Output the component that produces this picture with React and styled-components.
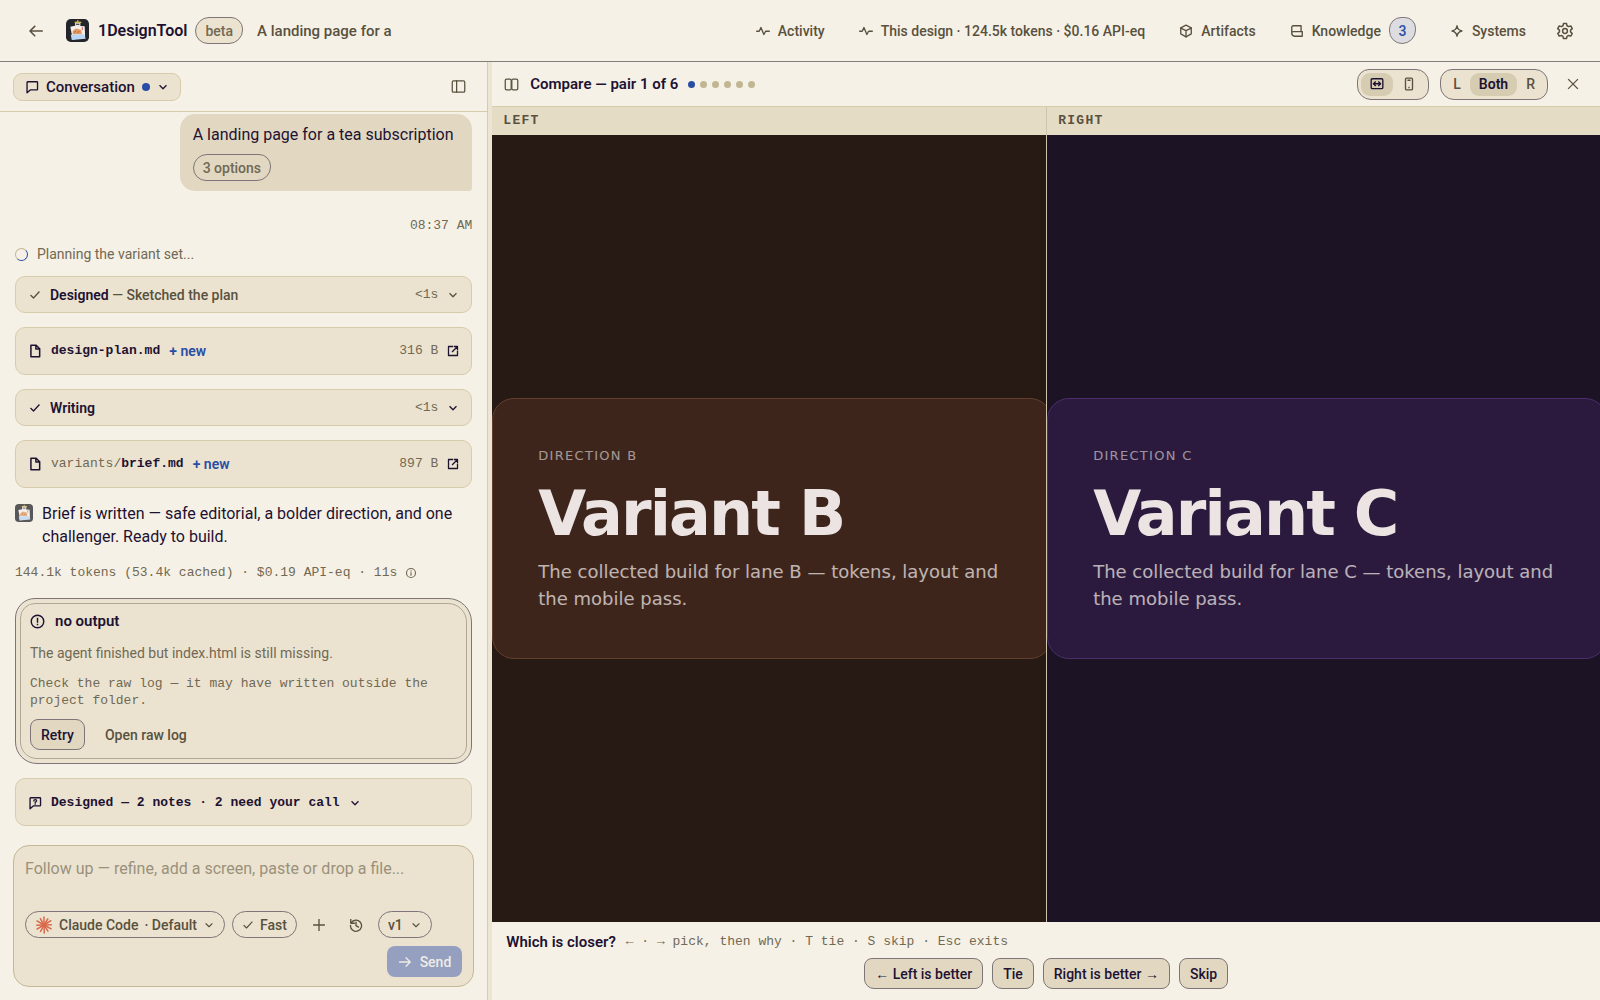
import React, { useState } from 'react';
import styled, { createGlobalStyle, css } from 'styled-components';

const sans = '"Roboto", "Liberation Sans", sans-serif';
const mono = '"Liberation Mono", "DejaVu Sans Mono", monospace';

const ink = '#1e1232';
const soft = '#59513f';
const muted = '#716953';
const paper = '#f6f1e6';
const card = '#ebe3d0';
const line = '#d6ccab';
const strong = '#7d7577';
const blue = '#2a4da5';

const GlobalStyle = createGlobalStyle`
  * { box-sizing: border-box; }
  body {
    margin: 0;
    background: ${paper};
    color: ${ink};
    font-family: ${sans};
    font-size: 14px;
    line-height: 20px;
  }
  button, textarea, select { font: inherit; color: inherit; margin: 0; }
  button { cursor: pointer; }
  h1, h2, h3, p { margin: 0; font-size: inherit; font-weight: inherit; }
`;

const Page = styled.div`
  height: 100vh;
  display: flex;
  flex-direction: column;
`;

const Svg = styled.svg`
  flex: none;
  display: block;
  fill: none;
  stroke: currentColor;
  stroke-width: ${p => p.$stroke || 2.3};
  stroke-linecap: square;
  stroke-linejoin: round;
`;

const shapes = {
  back: <path d="M21 12H3.500M10 5l-7 7 7 7" />,
  arrow: <path d="M3 12h17M14 5l7 7-7 7" />,
  pulse: <path d="M1.500 12.500h4l3-6.500 5 12 3-5.500h6" />,
  cube: <><path d="M12 2l9 4.500v10.500L12 22l-9-5V6.500z" /><path d="M3 7l9 4.500L21 7M12 12v10" /></>,
  book: <path d="M19 13V3H5.500A2.500 2.500 0 0 0 3 5.500v10M19 13H5.500A2.500 2.500 0 0 0 3 15.500 5.500 5.500 0 0 0 8 21h13v-8" />,
  spark: <path d="M12 3c.8 5.500 3.200 8 8.500 9-5.300 1-7.700 3.500-8.500 9-.8-5.500-3.200-8-8.500-9 5.300-1 7.700-3.500 8.500-9z" />,
  gear: <><circle cx="12" cy="12" r="3.200" /><path d="M10 2h4l.7 3 2 1.200 3-.9 2 3.500-2.300 2.100v2.300l2.300 2.100-2 3.500-3-.9-2 1.200-.7 3h-4l-.7-3-2-1.200-3 .9-2-3.500 2.300-2.100v-2.300L2.300 8.800l2-3.500 3 .9 2-1.200z" /></>,
  chat: <path d="M4.500 3h16a1 1 0 0 1 1 1v12a1 1 0 0 1-1 1H9l-5.500 5V4a1 1 0 0 1 1-1z" />,
  question: <><path d="M4.500 3h16a1 1 0 0 1 1 1v12a1 1 0 0 1-1 1H9l-5.500 5V4a1 1 0 0 1 1-1z" /><path d="M10 8.200c.3-2.700 5.200-2.400 4.700.3-.3 1.400-2 1.500-2.300 2.800M12.300 13.800v.1" /></>,
  panel: <><rect x="2" y="3" width="20" height="18" rx="2" /><path d="M9 3v18" /></>,
  compare: <><rect x="2" y="3.500" width="9.500" height="17" rx="2" /><rect x="12.500" y="3.500" width="9.500" height="17" rx="2" /></>,
  down: <path d="M6 9.500l6 6 6-6" />,
  check: <path d="M4 13l5 5L20 6" />,
  file: <path d="M5 2h9l6 6v14H5zM13.500 2v6.500H20" />,
  open: <path d="M11 3H3v18h18v-8M15 3h6v6M20.500 3.500L11 13" />,
  info: <><circle cx="12" cy="12" r="9" /><path d="M12 11.500v5M12 7.500v.2" /></>,
  alert: <><circle cx="12" cy="12" r="10" /><path d="M12 7v6M12 16.800v.2" /></>,
  plus: <path d="M12 3v18M3 12h18" />,
  close: <path d="M3 3l18 18M21 3L3 21" />,
  history: <path d="M3 3v6h6M3.500 9a9.500 9.500 0 1 1-1 4M12 7.500V13l4 2.500" />,
  desktop: <><rect x="2" y="3" width="20" height="17" rx="2" /><path d="M6 11.500h12M9 8.500l-3 3 3 3M15 8.500l3 3-3 3" /></>,
  phone: <><rect x="6" y="2" width="12" height="20" rx="2" /><path d="M10.500 5.500h3M12 18v.2" /></>
};

const Icon = ({ name, size = 14, stroke }) => (
  <Svg viewBox="0 0 24 24" width={size} height={size} $stroke={stroke} aria-hidden="true">
    {shapes[name]}
  </Svg>
);

const Logo = ({ size, faded }) => (
  <svg viewBox="0 0 24 24" width={size} height={size} opacity={faded ? 0.75 : 1} aria-hidden="true">
    <rect width="24" height="24" rx="5" fill="#24252a" />
    <path d="M4.500 8l5-1 10 .5.500 12-13 2z" fill="#f4f1ee" />
    <path d="M9.500 3h5.500v5H9.500z" fill="#ece8e2" />
    <path d="M9 3.500h7M12.300 1v3" stroke="#d8b94c" strokeWidth="1.200" />
    <path d="M10.500 5.500h3.500" stroke="#33353b" strokeWidth="1.200" />
    <path d="M7 16v-3.500l3-2.500 3 .5 3 1 .5 4.500z" fill="#e39a62" />
    <path d="M8.500 14l2-1.500M12 14.500l2-2" stroke="#a9623a" />
    <path d="M17 8.500v3" stroke="#d14a4a" />
    <path d="M5 16.500l14-.5 1.500 4.500-14.500 1.500z" fill="#b9d6f4" />
  </svg>
);

const rays = [0, 32, 58, 88, 118, 147, 178, 208, 240, 268, 300, 330];

const Burst = () => (
  <svg viewBox="0 0 24 24" width="18" height="18" stroke="#d9694b" strokeWidth="2" aria-hidden="true">
    {rays.map((angle, index) => (
      <path key={angle} d={index % 2 ? 'M12 12V1.500' : 'M12 12V.5'} transform={`rotate(${angle} 12 12)`} />
    ))}
  </svg>
);

/* ---------- top bar ---------- */

const TopBar = styled.header`
  flex: none;
  height: 62px;
  padding: 0 22px 0 24px;
  display: flex;
  align-items: center;
  border-bottom: 1px solid #857d7b;
  color: ${soft};
`;

const GhostButton = styled.button`
  display: flex;
  align-items: center;
  justify-content: center;
  gap: 8px;
  border: 0;
  background: none;
  padding: ${p => (p.$wide ? '4px 17px' : '4px')};
  font-weight: 500;
  color: ${soft};
  white-space: nowrap;
`;

const Brand = styled.a`
  display: flex;
  align-items: center;
  gap: 9px;
  margin-left: 18px;
  color: ${ink};
  font-size: 16px;
  font-weight: 600;
  text-decoration: none;
`;

const Pill = styled.span`
  display: inline-flex;
  align-items: center;
  height: 27px;
  padding: 0 9px;
  border: 1px solid ${strong};
  border-radius: 14px 12px 14px 13px;
  background: ${p => (p.$filled ? card : 'transparent')};
  color: ${muted};
  font-weight: 500;
`;

const ProjectName = styled.h1`
  flex: 1;
  margin-left: 14px;
  font-size: 15px;
  font-weight: 500;
`;

const BetaPill = styled(Pill)`
  margin-left: 8px;
`;

const Nav = styled.nav`
  display: flex;
  align-items: center;
`;

const SettingsButton = styled(GhostButton)`
  margin-left: 9px;
`;

const Count = styled.span`
  display: grid;
  place-items: center;
  width: 27px;
  height: 27px;
  border: 1px solid ${strong};
  border-radius: 13px 12px 15px 14px;
  background: #dddde1;
  color: ${blue};
`;

/* ---------- layout ---------- */

const Workspace = styled.main`
  flex: 1;
  min-height: 0;
  display: grid;
  grid-template-columns: minmax(360px, 4fr) minmax(0, 9fr);
`;

const Sidebar = styled.section`
  min-height: 0;
  display: flex;
  flex-direction: column;
  border-right: 4px solid #ece5d3;
`;

const SidebarInner = styled.div`
  flex: 1;
  min-height: 0;
  display: flex;
  flex-direction: column;
  border-right: 1px solid ${line};
`;

const SidebarHead = styled.div`
  flex: none;
  height: 50px;
  padding: 0 17px 0 13px;
  display: flex;
  align-items: center;
  justify-content: space-between;
  border-bottom: 1px solid ${line};
`;

const ThreadButton = styled.button`
  display: flex;
  align-items: center;
  gap: 7px;
  height: 28px;
  padding: 0 11px;
  border: 1px solid ${line};
  border-radius: 9px;
  background: ${card};
  font-size: 15px;
  font-weight: 500;
`;

const Dot = styled.span`
  width: ${p => p.$size}px;
  height: ${p => p.$size}px;
  border-radius: 50%;
  background: ${p => (p.$on ? blue : '#c1b694')};
`;

const Thread = styled.div`
  flex: 1;
  min-height: 0;
  overflow: hidden;
  padding: 2px 15px 0;
  display: flex;
  flex-direction: column;
  gap: 14px;
`;

const Mine = styled.div`
  display: flex;
  flex-direction: column;
  align-items: flex-end;
  gap: 28px;
`;

const Bubble = styled.div`
  width: 64%;
  padding: 10px 13px;
  border-radius: 15px 15px 3px 15px;
  background: #e2d8c2;
  font-size: 16px;
  line-height: 22px;

  & ${Pill} {
    margin-top: 8px;
    font-size: 14px;
  }
`;

const Mono = styled.span`
  font-family: ${mono};
  font-size: 13px;
  font-weight: 400;
  line-height: 14px;
  color: ${muted};
`;

const Planning = styled.div`
  display: flex;
  align-items: center;
  gap: 9px;
  line-height: 15px;
  color: ${muted};
`;

const Spinner = styled.span`
  width: 13px;
  height: 13px;
  border: 1px solid #c1b694;
  border-right-color: ${blue};
  border-bottom-color: ${blue};
  border-radius: 50%;
`;

const cardStyle = css`
  width: 100%;
  flex: none;
  display: flex;
  align-items: center;
  border: 1px solid ${line};
  border-radius: 10px;
  background: ${card};
  text-align: left;
`;

const Step = styled.button`
  ${cardStyle}
  height: 37px;
  padding: 0 12px 0 13px;
  gap: 9px;
  font-weight: 500;
  color: ${p => (p.$dim ? soft : ink)};

  & b { color: ${ink}; font-weight: 600; }
`;

const Grow = styled.span`
  flex: 1;
`;

const FileRow = styled.button`
  ${cardStyle}
  height: 48px;
  padding: 0 12px;
  gap: 9px;
`;

const FileName = styled(Mono)`
  color: ${ink};
  font-weight: 700;

  & i { font-style: normal; font-weight: 400; color: ${muted}; }
`;

const NewTag = styled.span`
  flex: 1;
  color: ${blue};
  font-weight: 600;
`;

const Reply = styled.div`
  display: flex;
  gap: 9px;
  font-size: 16px;
  line-height: 23px;

  & svg { flex: none; margin-top: 2px; }
`;

const Usage = styled.div`
  display: flex;
  align-items: center;
  gap: 8px;
  height: 22px;
  color: ${muted};
`;

const Alert = styled.section`
  flex: none;
  padding: 12px 14px 13px;
  border: 1px solid ${strong};
  border-radius: 20px 24px 18px 22px;
  outline: 1px solid #b0a797;
  outline-offset: -6px;
  background: ${card};
  color: ${soft};
`;

const AlertTitle = styled.h2`
  display: flex;
  align-items: center;
  gap: 10px;
  color: ${ink};
  font-size: 15px;
  font-weight: 600;
`;

const AlertText = styled.p`
  margin-top: 12px;
  color: ${muted};
`;

const AlertHint = styled(AlertText)`
  font-family: ${mono};
  font-size: 13px;
  line-height: 17px;
`;

const AlertActions = styled.div`
  margin-top: 10px;
  display: flex;
  gap: 3px;
`;

const Button = styled.button`
  height: 31px;
  padding: 0 10px;
  border: 1px solid ${strong};
  border-radius: 8px 9px 8px 10px;
  background: #e2d8c2;
  color: ${ink};
  font-weight: 500;
  white-space: nowrap;
`;

const Notes = styled(FileRow)`
  padding-top: 2px;
  font-family: ${mono};
  font-size: 13px;
  font-weight: 700;
`;

/* ---------- composer ---------- */

const Composer = styled.form`
  flex: none;
  margin: 16px 13px 13px;
  padding: 11px 11px 9px;
  border: 1px solid #c6b897;
  border-radius: 16px;
  background: ${card};
`;

const Prompt = styled.textarea`
  display: block;
  width: 100%;
  height: 44px;
  padding: 0;
  border: 0;
  outline: 0;
  resize: none;
  background: none;
  font-size: 16px;
  line-height: 24px;

  &::placeholder { color: #9a917b; opacity: 1; }
`;

const Tools = styled.div`
  margin-top: 10px;
  display: flex;
  gap: 7px;
  color: ${soft};
`;

const Chip = styled.button`
  display: flex;
  align-items: center;
  gap: 6px;
  height: 27px;
  padding: 0 9px;
  border: 1px solid ${strong};
  border-radius: 14px;
  background: none;
  font-weight: 500;
  white-space: nowrap;
`;

const ToolButton = styled(GhostButton)`
  width: 30px;
  height: 27px;
`;

const Version = styled(Chip)`
  & select {
    appearance: none;
    width: 16px;
    padding: 0;
    border: 0;
    background: none;
    font-weight: 500;
  }
`;

const SendRow = styled.div`
  margin-top: 8px;
  display: flex;
  justify-content: flex-end;
`;

const Send = styled.button`
  display: flex;
  align-items: center;
  gap: 8px;
  height: 31px;
  padding: 0 11px;
  border: 0;
  border-radius: 8px;
  background: #959fbf;
  color: #eeebe6;
  font-weight: 500;
`;

/* ---------- compare ---------- */

const Compare = styled.section`
  min-height: 0;
  display: flex;
  flex-direction: column;
`;

const CompareHead = styled.div`
  flex: none;
  height: 45px;
  padding: 0 17px 0 12px;
  display: flex;
  align-items: center;
  border-bottom: 1px solid ${line};
  color: ${soft};
`;

const CompareTitle = styled.h2`
  margin: 0 10px 0 11px;
  color: ${ink};
  font-size: 15px;
  font-weight: 600;
`;

const Dots = styled.div`
  flex: 1;
  display: flex;
  gap: 5px;
`;

const Segments = styled.div`
  display: flex;
  height: 31px;
  margin-right: 11px;
  padding: 3px;
  border: 1px solid ${strong};
  border-radius: 12px 13px 12px 14px;
  background: ${card};
`;

const Segment = styled.button`
  display: grid;
  place-items: center;
  padding: 0 9px;
  border: 0;
  border-radius: 9px;
  background: ${p => (p.$active ? '#d6ccb2' : 'none')};
  color: ${p => (p.$active ? ink : soft)};
  font-weight: ${p => (p.$active ? 600 : 500)};
`;

const CloseButton = styled(GhostButton)`
  margin-left: 4px;
`;

const Panes = styled.div`
  flex: 1;
  min-height: 0;
  display: grid;
  grid-template-columns: 1fr 1fr;
`;

const Pane = styled.div`
  min-width: 0;
  display: flex;
  flex-direction: column;

  & + & { border-left: 1px solid #cfc4ad; }
`;

const PaneLabel = styled.h3`
  flex: none;
  height: 28px;
  padding: 0 11px;
  background: #e5dcc6;
  color: ${soft};
  font-family: ${mono};
  font-size: 13px;
  font-weight: 700;
  line-height: 28px;
  letter-spacing: 0.1em;
`;

const tones = {
  b: { back: '#271a14', face: '#3e251c', edge: '#633f2e' },
  c: { back: '#1c1325', face: '#2b1a3d', edge: '#4b2f6b' }
};

const Stage = styled.div`
  flex: 1;
  overflow: hidden;
  display: flex;
  align-items: center;
  background: ${p => tones[p.$tone].back};
`;

const VariantCard = styled.article`
  flex: none;
  width: 560px;
  min-width: 101%;
  padding: 46px 45px;
  border: 1px solid ${p => tones[p.$tone].edge};
  border-radius: 22px;
  background: ${p => tones[p.$tone].face};
  color: #ebe4e2;
  font-family: "DejaVu Sans", sans-serif;
`;

const Eyebrow = styled.p`
  font-size: 13px;
  line-height: 22px;
  letter-spacing: 0.1em;
  text-transform: uppercase;
  opacity: 0.6;
`;

const VariantName = styled.h2`
  margin: 10px 0 8px;
  font-size: 62px;
  font-weight: 700;
  line-height: 73px;
  letter-spacing: -0.03em;
`;

const VariantText = styled.p`
  max-width: 464px;
  font-size: 18px;
  line-height: 27px;
  opacity: 0.75;
`;

const Verdict = styled.footer`
  flex: none;
  padding: 11px 14px;
  display: flex;
  flex-direction: column;
  gap: 7px;
`;

const Question = styled.p`
  display: flex;
  align-items: center;
  gap: 10px;
  height: 18px;
  font-size: 15px;
  font-weight: 600;
  line-height: 18px;
`;

const Answers = styled.div`
  display: flex;
  justify-content: center;
  gap: 9px;
`;

const variants = [
  { id: 'b', side: 'Left', letter: 'B' },
  { id: 'c', side: 'Right', letter: 'C' }
];

const StepCard = ({ title, detail, dim }) => (
  <Step type="button" $dim={dim}>
    <Icon name="check" size={12} stroke={2.6} />
    <Grow><b>{title}</b>{detail && ` — ${detail}`}</Grow>
    <Mono>&lt;1s</Mono>
    <Icon name="down" size={12} stroke={2.6} />
  </Step>
);

const FileCard = ({ folder, name, size }) => (
  <FileRow type="button">
    <Icon name="file" size={14} stroke={2.6} />
    <FileName>{folder && <i>{folder}</i>}{name}</FileName>
    <NewTag>+ new</NewTag>
    <Mono>{size}</Mono>
    <Icon name="open" size={12} stroke={2.6} />
  </FileRow>
);

const App = () => {
  const [view, setView] = useState('Both');
  const [device, setDevice] = useState('desktop');
  const [prompt, setPrompt] = useState('');

  return (
    <Page>
      <GlobalStyle />
      <TopBar>
        <GhostButton type="button" aria-label="Back"><Icon name="back" size={16} /></GhostButton>
        <Brand href="#home"><Logo size={23} />1DesignTool</Brand>
        <BetaPill $filled>beta</BetaPill>
        <ProjectName>A landing page for a</ProjectName>
        <Nav>
          <GhostButton type="button" $wide><Icon name="pulse" />Activity</GhostButton>
          <GhostButton type="button" $wide><Icon name="pulse" />This design · 124.5k tokens · $0.16 API-eq</GhostButton>
          <GhostButton type="button" $wide><Icon name="cube" />Artifacts</GhostButton>
          <GhostButton type="button" $wide><Icon name="book" />Knowledge <Count>3</Count></GhostButton>
          <GhostButton type="button" $wide><Icon name="spark" />Systems</GhostButton>
          <SettingsButton type="button" aria-label="Settings"><Icon name="gear" size={18} stroke={2} /></SettingsButton>
        </Nav>
      </TopBar>

      <Workspace>
        <Sidebar>
          <SidebarInner>
            <SidebarHead>
              <ThreadButton type="button" aria-haspopup="menu">
                <Icon name="chat" />Conversation <Dot $size={8} $on /><Icon name="down" size={12} stroke={2.6} />
              </ThreadButton>
              <GhostButton type="button" aria-label="Collapse panel"><Icon name="panel" size={15} stroke={2} /></GhostButton>
            </SidebarHead>

            <Thread>
              <Mine>
                <Bubble>
                  <p>A landing page for a tea subscription</p>
                  <Pill>3 options</Pill>
                </Bubble>
                <Mono as="time">08:37 AM</Mono>
              </Mine>
              <Planning><Spinner />Planning the variant set...</Planning>
              <StepCard title="Designed" detail="Sketched the plan" dim />
              <FileCard name="design-plan.md" size="316 B" />
              <StepCard title="Writing" />
              <FileCard folder="variants/" name="brief.md" size="897 B" />
              <Reply>
                <Logo size={18} faded />
                <p>Brief is written — safe editorial, a bolder direction, and one challenger. Ready to build.</p>
              </Reply>
              <Usage>
                <Mono>144.1k tokens (53.4k cached) · $0.19 API-eq · 11s</Mono>
                <Icon name="info" size={12} />
              </Usage>
              <Alert>
                <AlertTitle><Icon name="alert" size={15} stroke={2.3} />no output</AlertTitle>
                <AlertText>The agent finished but index.html is still missing.</AlertText>
                <AlertHint>Check the raw log — it may have written outside the project folder.</AlertHint>
                <AlertActions>
                  <Button type="button">Retry</Button>
                  <GhostButton type="button" $wide>Open raw log</GhostButton>
                </AlertActions>
              </Alert>
              <Notes type="button">
                <Icon name="question" stroke={2.3} />
                Designed — 2 notes · 2 need your call
                <Icon name="down" size={12} stroke={2.6} />
              </Notes>
            </Thread>

            <Composer onSubmit={e => e.preventDefault()}>
              <Prompt
                aria-label="Follow up"
                placeholder="Follow up — refine, add a screen, paste or drop a file..."
                value={prompt}
                onChange={e => setPrompt(e.target.value)}
              />
              <Tools>
                <Chip type="button" aria-haspopup="menu">
                  <Burst />Claude Code <span>· Default</span><Icon name="down" size={12} />
                </Chip>
                <Chip type="button"><Icon name="check" size={12} />Fast</Chip>
                <ToolButton type="button" aria-label="Attach"><Icon name="plus" /></ToolButton>
                <ToolButton type="button" aria-label="History"><Icon name="history" /></ToolButton>
                <Version as="label">
                  <select aria-label="Version" defaultValue="v1"><option>v1</option></select>
                  <Icon name="down" size={12} />
                </Version>
              </Tools>
              <SendRow>
                <Send type="submit"><Icon name="arrow" />Send</Send>
              </SendRow>
            </Composer>
          </SidebarInner>
        </Sidebar>

        <Compare>
          <CompareHead>
            <Icon name="compare" size={15} stroke={2} />
            <CompareTitle>Compare — pair 1 of 6</CompareTitle>
            <Dots>{[1, 2, 3, 4, 5, 6].map(n => <Dot key={n} $size={7} $on={n === 1} />)}</Dots>
            <Segments role="group" aria-label="Device">
              {['desktop', 'phone'].map(name => (
                <Segment key={name} type="button" aria-label={name} $active={device === name} onClick={() => setDevice(name)}>
                  <Icon name={name} />
                </Segment>
              ))}
            </Segments>
            <Segments role="group" aria-label="Side">
              {['L', 'Both', 'R'].map(name => (
                <Segment key={name} type="button" $active={view === name} onClick={() => setView(name)}>{name}</Segment>
              ))}
            </Segments>
            <CloseButton type="button" aria-label="Close"><Icon name="close" size={12} /></CloseButton>
          </CompareHead>

          <Panes>
            {variants.map(({ id, side, letter }) => (
              <Pane key={id}>
                <PaneLabel>{side.toUpperCase()}</PaneLabel>
                <Stage $tone={id}>
                  <VariantCard $tone={id}>
                    <Eyebrow>Direction {letter}</Eyebrow>
                    <VariantName>Variant {letter}</VariantName>
                    <VariantText>The collected build for lane {letter} — tokens, layout and the mobile pass.</VariantText>
                  </VariantCard>
                </Stage>
              </Pane>
            ))}
          </Panes>

          <Verdict>
            <Question>Which is closer? <Mono>← · → pick, then why · T tie · S skip · Esc exits</Mono></Question>
            <Answers>
              <Button type="button">← Left is better</Button>
              <Button type="button">Tie</Button>
              <Button type="button">Right is better →</Button>
              <Button type="button">Skip</Button>
            </Answers>
          </Verdict>
        </Compare>
      </Workspace>
    </Page>
  );
};

export default App;
